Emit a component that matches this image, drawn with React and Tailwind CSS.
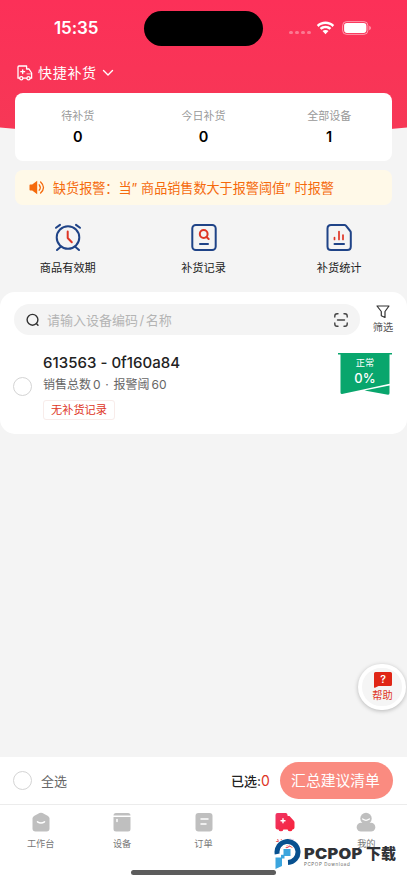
import React from 'react';

function StatusBar() {
  return (
    <div className="flex h-[56px] items-center">
      <div className="w-[144px] pl-[54px] text-[17px] leading-[20px] font-semibold tracking-[-0.1px] text-white">15:35</div>
      <div className="mt-[1px] h-[35px] w-[119px] rounded-full bg-black" />
      <div className="ml-[26px] mt-[9px] flex gap-[2.5px]">
        {[0, 1, 2, 3].map((i) => (
          <span key={i} className="h-[3.5px] w-[3.5px] rounded-full bg-white/35" />
        ))}
      </div>
      <svg className="ml-[5px] h-[14px] w-[19px]" viewBox="0 0 19 14" fill="#fff">
        <path d="M9.5 0.6C6.2.6 3.1 1.900.8 4.100L2.500 5.900C4.400 4.100 6.800 3.100 9.500 3.100S14.600 4.100 16.500 5.900L18.200 4.100C15.900 1.900 12.800.6 9.500.6Z" />
        <path d="M9.500 4.800C7.300 4.800 5.300 5.600 3.700 7.100L5.400 8.800C6.500 7.800 7.900 7.200 9.500 7.200S12.500 7.800 13.600 8.800L15.300 7.100C13.700 5.600 11.700 4.800 9.500 4.800Z" />
        <path d="M9.500 8.900C8.300 8.900 7.300 9.300 6.500 10L9.500 13.200L12.500 10C11.700 9.300 10.700 8.900 9.500 8.900Z" />
      </svg>
      <svg className="ml-[7px] h-[14px] w-[30px]" viewBox="0 0 30 14">
        <rect x="0.600" y="0.600" width="25.300" height="12.800" rx="4" fill="none" stroke="#fff" strokeOpacity=".5" />
        <rect x="2.100" y="2.100" width="22.300" height="9.800" rx="2.800" fill="#fff" />
        <path d="M27.200 4.800Q29 5.500 29 7T27.200 9.200Z" fill="#fff" fillOpacity=".5" />
      </svg>
    </div>
  );
}

function Stat({ label, value }) {
  return (
    <div className="flex flex-1 flex-col items-center pt-[15px]">
      <span className="text-[11px] leading-[16px] text-[#999]">{label}</span>
      <span className="mt-[3px] text-[14.5px] leading-[20px] font-semibold text-black">{value}</span>
    </div>
  );
}

function Shortcut({ label, children }) {
  return (
    <div className="flex flex-1 flex-col items-center">
      <svg className="h-[30px] w-[30px]" viewBox="0 0 30 30" fill="none" strokeWidth="2" strokeLinecap="round" strokeLinejoin="round" stroke="#1f4387">
        {children}
      </svg>
      <span className="mt-[8px] text-[11.2px] leading-[16px] text-[#222]">{label}</span>
    </div>
  );
}

function Tab({ label, active, children }) {
  return (
    <div className="flex flex-1 flex-col items-center pt-[7px]">
      <svg className="h-[20px] w-[20px]" viewBox="0 0 20 20" fill="#bfbfbf">{children}</svg>
      <span className={'mt-[5px] text-[9.2px] leading-[14px] ' + (active ? 'font-medium text-[#e5243a]' : 'text-[#777]')}>{label}</span>
    </div>
  );
}

export default function App() {
  return (
    <div className="relative flex h-[883px] w-[407px] flex-col overflow-hidden bg-[#f4f4f4] font-['Inter','Noto_Sans_CJK_SC',sans-serif]">
      <svg className="absolute top-0 left-0 h-[140px] w-[407px]" viewBox="0 0 407 140">
        <defs>
          <linearGradient id="header" x1="0" y1="0" x2="0" y2="1">
            <stop offset="0" stopColor="#fc3058" />
            <stop offset="1" stopColor="#f63856" />
          </linearGradient>
        </defs>
        <path d="M0 0H407V127.500Q203 148 0 127.500Z" fill="url(#header)" />
      </svg>

      <div className="relative flex flex-col">
        <StatusBar />
        <div className="flex h-[37px] items-center pb-[4px] pl-[17px] text-white">
          <svg className="h-[16px] w-[16px]" viewBox="0 0 16 16" fill="none" stroke="#fff" strokeWidth="1.300" strokeLinejoin="round" strokeLinecap="round">
            <path d="M2.500 13.200H1V2Q1 1 2 1H9.600V4H12L14.600 8V13.200H13.300M6.200 13.200H9.500M5.700 4.800V8.600M3.800 6.700H7.600" />
            <path d="M10 8.800H14.500" strokeOpacity=".6" />
            <circle cx="4.300" cy="13.200" r="1.600" />
            <circle cx="11.500" cy="13.200" r="1.600" />
          </svg>
          <span className="ml-[5px] text-[14px] leading-[20px] tracking-[0.7px]">快捷补货</span>
          <svg className="ml-[5px] h-[8px] w-[12px]" viewBox="0 0 12 8" fill="none" stroke="#fff" strokeWidth="1.400" strokeLinecap="round" strokeLinejoin="round">
            <path d="M1.500 1.500L6 6L10.500 1.500" />
          </svg>
        </div>

        <div className="mx-[15px] flex h-[68px] rounded-[8px] bg-white">
          <Stat label="待补货" value="0" />
          <Stat label="今日补货" value="0" />
          <Stat label="全部设备" value="1" />
        </div>

        <div className="mx-[15px] mt-[9px] flex h-[35px] items-center rounded-[8px] bg-[#fff9e8] pl-[14px] text-[#f56a0c]">
          <svg className="h-[15px] w-[16px]" viewBox="0 0 16 15" fill="none" stroke="#f56a0c" strokeWidth="1.300" strokeLinecap="round">
            <path d="M.500 5.200Q.500 4.500 1.200 4.500H3.200L8.200.8V14.200L3.200 10.500H1.200Q.500 10.500.500 9.800Z" fill="#f56a0c" stroke="none" />
            <path d="M10.200 4.800Q12.400 7.500 10.200 10.200M11.600 2Q17.400 7.500 11.600 13" />
          </svg>
          <span className="ml-[8px] flex text-[13.1px] leading-[20px] whitespace-nowrap">
            <span>缺货报警：当</span>
            <span className="w-[9.500px]">”</span>
            <span>商品销售数大于报警阈值</span>
            <span className="w-[9.500px]">”</span>
            <span>时报警</span>
          </span>
        </div>
      </div>

      <div className="mt-[17px] flex h-[70px]">
        <Shortcut label="商品有效期">
          <circle cx="15" cy="15.500" r="11.300" />
          <path d="M3 5.800L7 2.900M23 2.900L27 5.800M7.500 25L4 28M22.500 25L26 28" />
          <path d="M14.700 9.500V16L18.800 20.300" stroke="#de3525" />
        </Shortcut>
        <Shortcut label="补货记录">
          <rect x="3.300" y="3" width="23.400" height="25" rx="3.500" />
          <path d="M11 22H19" />
          <circle cx="14.700" cy="12" r="3.900" stroke="#de3525" />
          <path d="M17.500 15L19.700 17" stroke="#de3525" />
        </Shortcut>
        <Shortcut label="补货统计">
          <path d="M7 3H20.500Q21.300 3 21.900 3.700L26.200 9Q26.800 9.700 26.800 10.500V24.500Q26.800 28 23.300 28H7Q3.500 28 3.500 24.500V6.500Q3.500 3 7 3Z" />
          <path d="M10.500 22H20" />
          <path d="M10.500 15.500V17.500M15 9.500V17.500M19 13V17.500" strokeWidth="1.700" stroke="#de3525" />
        </Shortcut>
      </div>

      <div className="flex h-[142px] flex-col rounded-[15px] bg-white pt-[12px]">
        <div className="flex h-[31px] pl-[14px]">
          <div className="flex h-[31px] w-[346px] items-center rounded-full bg-[#f4f4f4] pr-[12px] pl-[12px]">
            <svg className="h-[14px] w-[14px]" viewBox="0 0 14 14" fill="none" stroke="#333" strokeWidth="1.400" strokeLinecap="round">
              <circle cx="6.500" cy="6.800" r="5.400" />
              <path d="M10.600 10.700L12 12.300" />
            </svg>
            <span className="ml-[7px] flex-1 text-[13px] leading-[20px] text-[#b4b4b4]">请输入设备编码<span className="px-[1.5px]">/</span>名称</span>
            <svg className="h-[14px] w-[14px]" viewBox="0 0 14 14" fill="none" stroke="#444" strokeWidth="1.400" strokeLinecap="round">
              <path d="M.8 4V3Q.8.8 3 .8H4M10 .8H11Q13.200.8 13.200 3V4M13.200 10V11Q13.200 13.200 11 13.200H10M4 13.200H3Q.8 13.200.8 11V10M3.500 7H10.500" />
            </svg>
          </div>
          <div className="flex flex-1 flex-col items-center pr-[1px]">
            <svg className="mt-[1px] h-[14px] w-[14px]" viewBox="0 0 14 14" fill="none" stroke="#333" strokeWidth="1.200" strokeLinejoin="round">
              <path d="M1 1H13L9 6.500V12.500L5.300 10.700V6.500Z" />
            </svg>
            <span className="mt-[1px] text-[10.2px] leading-[15px] text-[#555]">筛选</span>
          </div>
        </div>

        <div className="mt-[18px] flex h-[72px] pl-[13px]">
          <div className="mt-[24px] h-[19px] w-[19px] rounded-full border border-[#d4d4d4]" />
          <div className="ml-[11px] flex w-[295px] flex-col">
            <span className="text-[15px] leading-[20px] font-medium tracking-[0.03px] text-[#222]">613563 - 0f160a84</span>
            <span className="mt-[2px] flex text-[12px] leading-[20px] text-[#666]">
              <span className="w-[50px]">销售总数</span>
              <span>0</span>
              <span className="w-[13px] text-center">·</span>
              <span className="w-[38px]">报警阈</span>
              <span>60</span>
            </span>
            <span className="mt-[5px] flex h-[20px] w-[72px] items-center justify-center rounded-[3px] border border-[#f8ecea] text-[11.200px] leading-[16px] text-[#de3525]">无补货记录</span>
          </div>
          <div className="relative h-[46px] w-[54px] text-white">
            <svg className="absolute inset-0 h-[46px] w-[54px]" viewBox="0 0 54 46" fill="#09a66d">
              <path d="M0 0H54V1.500H51.500V30.800L24 36.700L4 41Q2.500 41 2.500 39.500V1.500H0Z" />
              <path d="M26.500 37.500L51.500 32.500V40Q51.500 42 50 41.800Z" />
            </svg>
            <div className="relative flex flex-col items-center">
              <span className="mt-[4px] text-[9.200px] leading-[12px]">正常</span>
              <span className="mt-[1px] text-[13px] leading-[17px] font-medium">0%</span>
            </div>
          </div>
        </div>
      </div>

      <div className="flex-1" />

      <div className="flex h-[48px] items-center border-b border-[#ececec] bg-white pl-[13px]">
        <div className="h-[19px] w-[19px] rounded-full border border-[#d4d4d4]" />
        <span className="ml-[9px] w-[190px] text-[13px] leading-[20px] text-[#666]">全选</span>
        <span className="w-[48.500px] text-[13px] leading-[20px] font-medium whitespace-nowrap text-[#222]">
          已选:<span className="text-[14px] font-normal text-[#de3525]">0</span>
        </span>
        <div className="flex h-[37px] w-[113px] items-center justify-center rounded-full bg-[#fa8b80] pr-[1px] text-[14.800px] leading-[20px] text-white">汇总建议清单</div>
      </div>

      <div className="flex h-[78px] bg-white">
        <Tab label="工作台">
          <path d="M3 4L8.500 1Q10 .3 11.500 1L17 4Q18.500 5 18.500 6.500V16.500Q18.500 19.500 15.500 19.500H4.500Q1.500 19.500 1.500 16.500V6.500Q1.500 5 3 4Z" />
          <path d="M6.500 9.800Q10 12.400 13.500 9.800" fill="none" stroke="#fff" strokeWidth="1.500" strokeLinecap="round" />
        </Tab>
        <Tab label="设备">
          <path d="M1.500 3.500Q1.500 1 4 1H16Q18.500 1 18.500 3.500H1.500ZM1.500 5H18.500V17Q18.500 19.500 16 19.500H4Q1.500 19.500 1.500 17Z" />
          <path d="M5 7.500V9.500" stroke="#fff" strokeWidth="1.500" strokeLinecap="round" />
        </Tab>
        <Tab label="订单">
          <rect x="1.500" y="1" width="17" height="18.500" rx="3" />
          <path d="M7 7H14M7 12H12" stroke="#fff" strokeWidth="1.500" strokeLinecap="round" />
        </Tab>
        <Tab label="补货" active>
          <defs>
            <linearGradient id="truck" x1="0" y1="0" x2="1" y2="1">
              <stop offset="0" stopColor="#ee3565" />
              <stop offset="1" stopColor="#f92339" />
            </linearGradient>
          </defs>
          <path d="M.500 3Q.500 1 2.500 1H11Q12.500 1 12.700 4H14.500L19 9Q19.500 9.700 19.500 10.500V15.500Q19.500 17.500 17.500 17.500A2.500 2.300 0 0 1 12.600 17.500H8.400A2.500 2.300 0 0 1 3.500 17.500H2.500Q.500 17.500.500 15.500Z" fill="url(#truck)" />
          <path d="M8 6.800V10.800M6 8.800H10" stroke="#fff" strokeWidth="1.400" strokeLinecap="round" />
        </Tab>
        <Tab label="我的">
          <circle cx="10" cy="6.500" r="5.700" />
          <rect x=".7" y="10.800" width="18.600" height="8.700" rx="4.300" />
          <path d="M6.600 7Q10 9.600 13.400 7" fill="none" stroke="#fff" strokeWidth="1.300" strokeLinecap="round" />
        </Tab>
      </div>

      <div className="absolute top-[870px] left-[131px] h-[5px] w-[145px] rounded-full bg-[#5c5c5c]" />

      <div className="absolute top-[664px] left-[358px] flex h-[46px] w-[48px] flex-col items-center rounded-full border-[4px] border-white bg-[#f5f5f5] pl-[1px] shadow-[0_1px_4px_rgba(0,0,0,0.25)]">
        <svg className="mt-[4px] h-[16px] w-[18px]" viewBox="0 0 18 16">
          <path d="M1.500 0H16.500Q18 0 18 1.500V12.500Q18 14 16.500 14H4.500L.5 16Z M0 1.500Q0 0 1.500 0V15.500H0Z" fill="#e02616" />
          <text x="9" y="11" textAnchor="middle" fontSize="10.500" fontWeight="600" fill="#fff">?</text>
        </svg>
        <span className="text-[10.200px] leading-[14px] text-[#de3525]">帮助</span>
      </div>

      <div className="absolute top-[839px] left-[274px] flex h-[33px] items-start">
        <svg className="h-[32px] w-[28px]" viewBox="0 0 28 32" fill="none">
          <path d="M3.300 16A10.500 10.500 0 1 1 13.500 23.800" stroke="#fff" strokeWidth="7" />
          <path d="M3.200 15A10.500 10.500 0 1 1 14 23.500" stroke="#07508f" strokeWidth="5" />
          <path d="M9.500 10H16.500V17H9.500ZM1.500 18.500H8V27L1.500 30Z" fill="#3ba5de" />
          <path d="M7 15.800H10.500V19.500H7Z" fill="#3ba5de" />
        </svg>
        <div className="ml-[2px] mt-[6px] flex flex-col">
          <div className="flex h-[17px] items-center text-[#303236]">
            <span className="w-[62px] origin-left scale-x-[1.17] text-[14px] leading-[17px] font-black tracking-[0.2px]">PCPOP</span>
            <span className="text-[15px] leading-[17px] font-black">下载</span>
          </div>
          <span className="text-[4.500px] leading-[5px] tracking-[0.600px] text-[#666]">PCPOP Download</span>
        </div>
      </div>
    </div>
  );
}
